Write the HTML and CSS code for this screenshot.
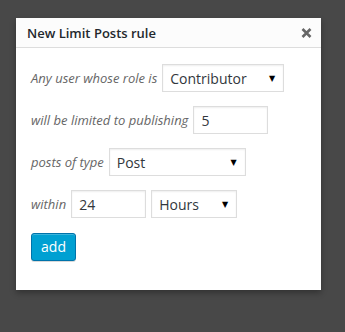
FILE: index.html
```html
<!DOCTYPE html>
<html>
<head>
<meta charset="utf-8">
<link rel="stylesheet" href="styles.css">
</head>
<body>
<div class="dialog">
  <div class="header">
    <span class="title">New Limit Posts rule</span>
    <svg class="close" width="11" height="10" viewBox="0 0 11 10"><path d="M1.5 1 L9.5 9 M9.5 1 L1.5 9" stroke="#666" stroke-width="2.6" stroke-linecap="butt"/></svg>
  </div>
  <div class="content">
    <div class="row">
      <span class="label">Any user whose role is</span>
      <span class="select w-role"><span>Contributor</span><span class="arrow">▼</span></span>
    </div>
    <div class="row">
      <span class="label">will be limited to publishing</span>
      <span class="input w-num">5</span>
    </div>
    <div class="row">
      <span class="label">posts of type</span>
      <span class="select w-type"><span>Post</span><span class="arrow">▼</span></span>
    </div>
    <div class="row">
      <span class="label">within</span>
      <span class="input w-num">24</span>
      <span class="select w-unit"><span>Hours</span><span class="arrow">▼</span></span>
    </div>
    <div class="row row-btn">
      <button class="btn">add</button>
    </div>
  </div>
</div>
</body>
</html>
```
FILE: styles.css
```css
html, body {
  margin: 0;
  padding: 0;
  background: #484848;
  height: 100%;
}
body {
  padding: 18px 0 0 16px;
  box-sizing: border-box;
  font-family: "Open Sans", sans-serif;
}
.dialog {
  width: 305px;
  height: 272px;
  background: #fff;
  box-shadow: 0 3px 6px rgba(0,0,0,0.3);
  display: flex;
  flex-direction: column;
}
.header {
  height: 29px;
  background: #fcfcfc;
  border-bottom: 1px solid #dddddd;
  display: flex;
  align-items: center;
  justify-content: space-between;
  padding: 0 9px 0 11px;
  flex-shrink: 0;
}
.title {
  font-size: 13px;
  font-weight: 600;
  color: #23282d;
}
.close {
  display: block;
}
.content {
  padding: 16px 0 0 15px;
  display: flex;
  flex-direction: column;
  gap: 14px;
}
.row {
  display: flex;
  align-items: center;
  height: 28px;
}
.row-btn {
  margin-top: 1px;
}
.label {
  font-style: italic;
  font-size: 13px;
  color: #666;
  margin-right: 5px;
}
.select, .input {
  box-sizing: border-box;
  height: 28px;
  border: 1px solid #dddddd;
  box-shadow: inset 0 1px 2px rgba(0,0,0,0.07);
  display: flex;
  align-items: center;
  justify-content: space-between;
  padding: 0 8px 0 7px;
  font-size: 14px;
  color: #32373c;
  background: #fff;
}
.arrow {
  font-size: 8px;
  color: #000;
  font-family: "DejaVu Sans", sans-serif;
}
.w-role { width: 122px; }
.w-num { width: 75px; }
.w-type { width: 137px; }
.w-unit { width: 86px; margin-left: 5px; }
.btn {
  height: 28px;
  width: 45px;
  background: #00a0d2;
  border: 1px solid #0073aa;
  border-radius: 3px;
  color: #fff;
  font-family: "Open Sans", sans-serif;
  font-size: 14px;
  padding: 0 0 2px;
  box-shadow: inset 0 1px 0 rgba(120,200,230,0.5), 0 1px 0 rgba(0,0,0,0.15);
}
```
